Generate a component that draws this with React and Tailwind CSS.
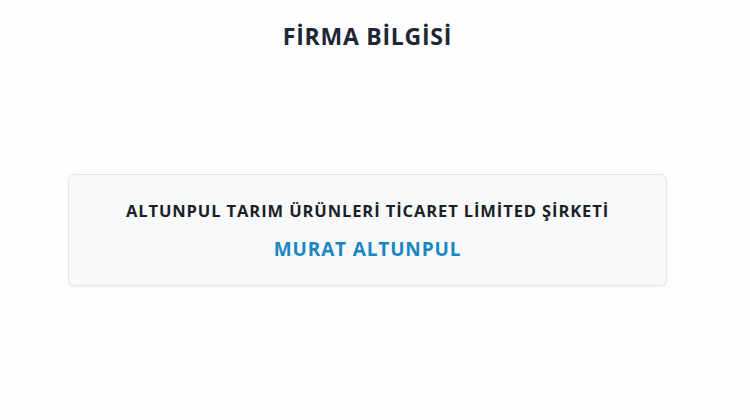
import React from 'react';

const App = () => {
  return (
    <div
      className="w-[750px] h-[420px] bg-[#fdfdfd]"
      style={{ fontFamily: '"Open Sans", "Liberation Sans", sans-serif' }}
    >
      <div className="w-[735px] flex flex-col items-center">
        <h1 className="mt-[21px] text-[23px] leading-[30px] font-bold text-[#1e2735] tracking-[0.75px]">
          FİRMA BİLGİSİ
        </h1>

        <div className="mt-[123px] w-[599px] h-[112px] rounded-md border border-[#e3e7ec] bg-[#f8f9fb] shadow-[0_1px_2px_rgba(0,0,0,0.06)] flex flex-col items-center justify-center">
          <p className="text-[16.5px] leading-[22px] font-bold text-[#1b1f27] tracking-[0.9px]">
            ALTUNPUL TARIM ÜRÜNLERİ TİCARET LİMİTED ŞİRKETİ
          </p>
          <p className="mt-[15px] text-[19px] leading-[24px] font-bold text-[#1a86c2] tracking-[0.85px]">
            MURAT ALTUNPUL
          </p>
        </div>
      </div>
    </div>
  );
};

export default App;
